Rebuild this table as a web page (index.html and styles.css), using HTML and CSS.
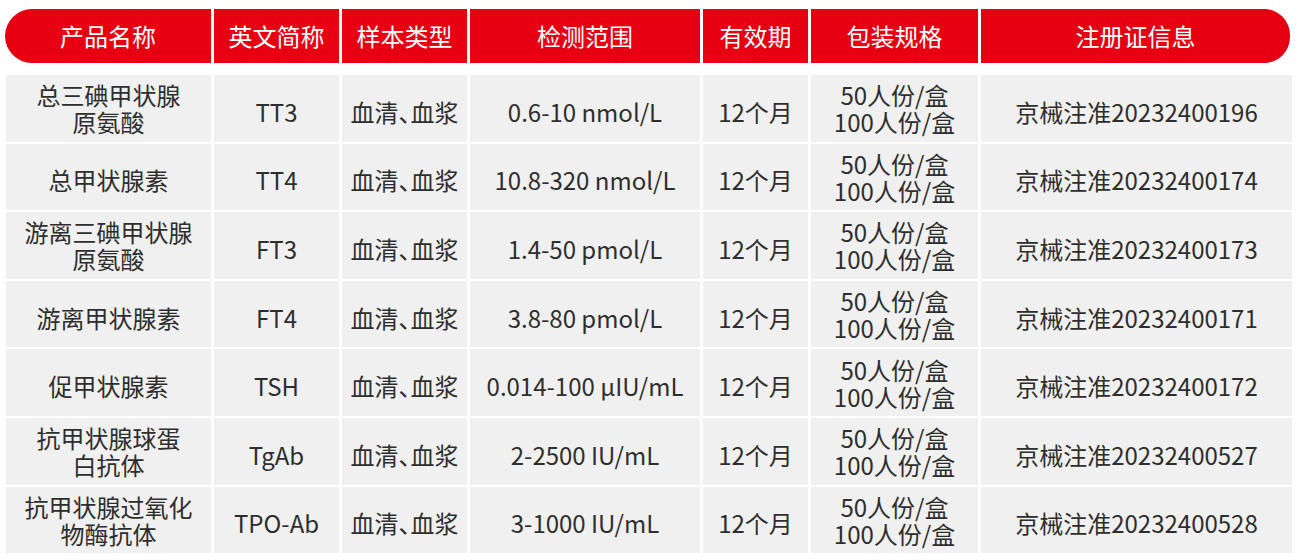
FILE: index.html
```html
<!DOCTYPE html>
<html lang="zh-CN">
<head>
<meta charset="utf-8">
<title>产品列表</title>
<link rel="stylesheet" href="styles.css">
</head>
<body>
<div class="wrap">
  <div class="head">
    <div class="hc first">产品名称</div>
    <div class="hc">英文简称</div>
    <div class="hc">样本类型</div>
    <div class="hc">检测范围</div>
    <div class="hc">有效期</div>
    <div class="hc">包装规格</div>
    <div class="hc last">注册证信息</div>
  </div>
  <div class="body">
    <div class="c">总三碘甲状腺<br>原氨酸</div>
    <div class="c one">TT3</div>
    <div class="c one">血清<span class="p">、</span>血浆</div>
    <div class="c one">0.6-10 nmol/L</div>
    <div class="c one">12个月</div>
    <div class="c">50人份/盒<br>100人份/盒</div>
    <div class="c one">京械注准20232400196</div>

    <div class="c one">总甲状腺素</div>
    <div class="c one">TT4</div>
    <div class="c one">血清<span class="p">、</span>血浆</div>
    <div class="c one">10.8-320 nmol/L</div>
    <div class="c one">12个月</div>
    <div class="c">50人份/盒<br>100人份/盒</div>
    <div class="c one">京械注准20232400174</div>

    <div class="c">游离三碘甲状腺<br>原氨酸</div>
    <div class="c one">FT3</div>
    <div class="c one">血清<span class="p">、</span>血浆</div>
    <div class="c one">1.4-50 pmol/L</div>
    <div class="c one">12个月</div>
    <div class="c">50人份/盒<br>100人份/盒</div>
    <div class="c one">京械注准20232400173</div>

    <div class="c one">游离甲状腺素</div>
    <div class="c one">FT4</div>
    <div class="c one">血清<span class="p">、</span>血浆</div>
    <div class="c one">3.8-80 pmol/L</div>
    <div class="c one">12个月</div>
    <div class="c">50人份/盒<br>100人份/盒</div>
    <div class="c one">京械注准20232400171</div>

    <div class="c one">促甲状腺素</div>
    <div class="c one">TSH</div>
    <div class="c one">血清<span class="p">、</span>血浆</div>
    <div class="c one">0.014-100 μIU/mL</div>
    <div class="c one">12个月</div>
    <div class="c">50人份/盒<br>100人份/盒</div>
    <div class="c one">京械注准20232400172</div>

    <div class="c">抗甲状腺球蛋<br>白抗体</div>
    <div class="c one">TgAb</div>
    <div class="c one">血清<span class="p">、</span>血浆</div>
    <div class="c one">2-2500 IU/mL</div>
    <div class="c one">12个月</div>
    <div class="c">50人份/盒<br>100人份/盒</div>
    <div class="c one">京械注准20232400527</div>

    <div class="c">抗甲状腺过氧化<br>物酶抗体</div>
    <div class="c one">TPO-Ab</div>
    <div class="c one">血清<span class="p">、</span>血浆</div>
    <div class="c one">3-1000 IU/mL</div>
    <div class="c one">12个月</div>
    <div class="c">50人份/盒<br>100人份/盒</div>
    <div class="c one">京械注准20232400528</div>
  </div>
</div>
</body>
</html>
```

FILE: styles.css
```css
html, body {
  margin: 0;
  padding: 0;
  background: #ffffff;
}

body {
  font-family: "Noto Sans CJK SC", "Noto Sans", sans-serif;
  color: #2e2e2e;
}

.wrap {
  padding: 9px 0 0 5px;
  width: 1292px;
}

.head {
  display: grid;
  grid-template-columns: 206px 125px 125px 230px 105px 167px 309px;
  column-gap: 3px;
  height: 54px;
  margin-bottom: 12px;
}

.hc {
  background: #e60012;
  color: #ffffff;
  font-size: 24px;
  font-weight: 400;
  display: flex;
  align-items: center;
  justify-content: center;
  line-height: 1;
}

.hc.first {
  border-radius: 27px 0 0 27px;
}

.hc.last {
  border-radius: 0 26px 26px 0;
}

.body {
  display: grid;
  grid-template-columns: 205px 125px 125px 230px 105px 167px 311px;
  grid-auto-rows: 66.6px;
  column-gap: 3px;
  row-gap: 2px;
  margin-left: 1px;
}

.c {
  background: #f0f0f0;
  font-size: 24px;
  line-height: 27px;
  display: flex;
  align-items: center;
  justify-content: center;
  text-align: center;
  white-space: nowrap;
}

.c.one {
  padding-top: 6px;
}

.p {
  font-feature-settings: "halt" 1;
}
```
